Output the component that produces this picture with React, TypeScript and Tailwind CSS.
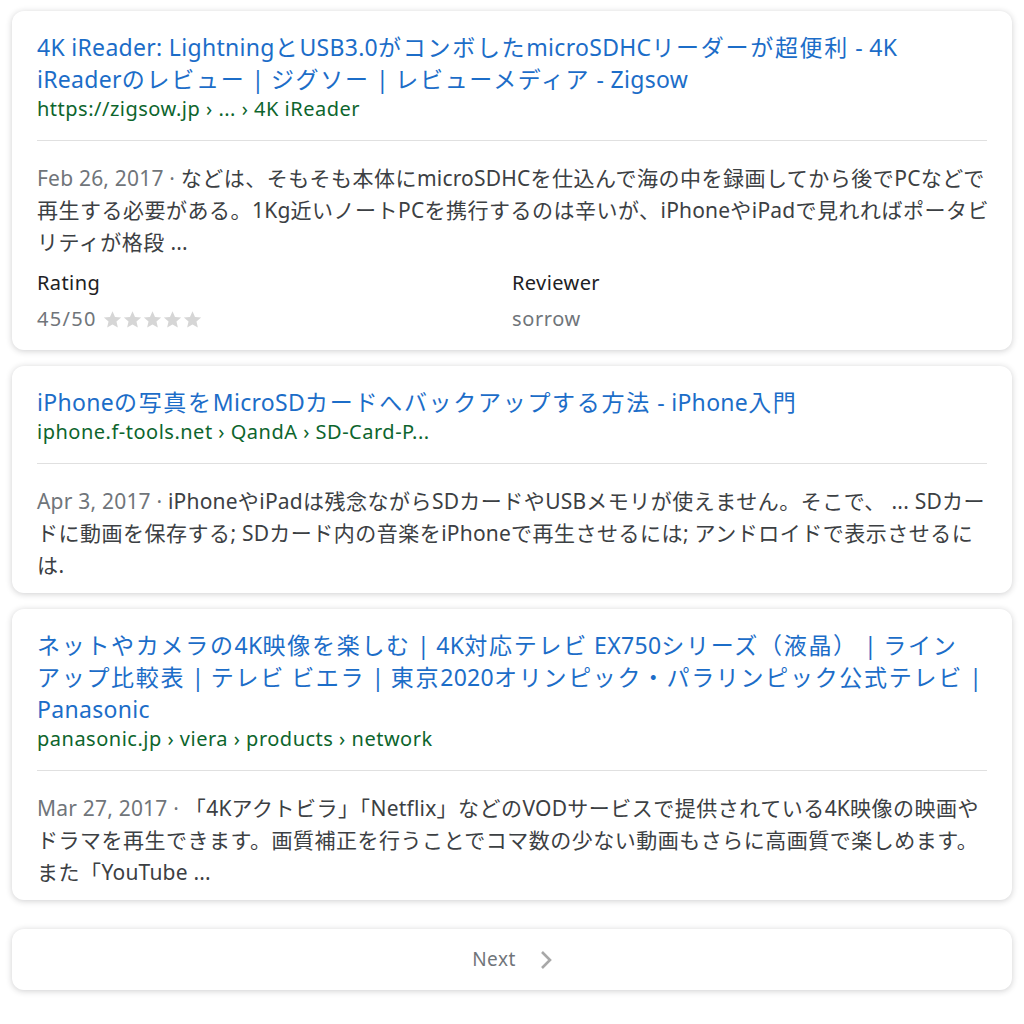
interface Result {
	title: string[]
	url: string
	date: string
	snippet: string[]
	rating?: { score: string; reviewer: string }
}

const results: Result[] = [
	{
		title: [
			"4K iReader: LightningとUSB3.0がコンボしたmicroSDHCリーダーが超便利 - 4K",
			"iReaderのレビュー | ジグソー | レビューメディア - Zigsow"
		],
		url: "https://zigsow.jp › ... › 4K iReader",
		date: "Feb 26, 2017",
		snippet: [
			"などは、そもそも本体にmicroSDHCを仕込んで海の中を録画してから後でPCなどで",
			"再生する必要がある。1Kg近いノートPCを携行するのは辛いが、iPhoneやiPadで見れればポータビ",
			"リティが格段 ..."
		],
		rating: { score: "45/50", reviewer: "sorrow" }
	},
	{
		title: ["iPhoneの写真をMicroSDカードへバックアップする方法 - iPhone入門"],
		url: "iphone.f-tools.net › QandA › SD-Card-P...",
		date: "Apr 3, 2017",
		snippet: [
			"iPhoneやiPadは残念ながらSDカードやUSBメモリが使えません。そこで、 ... SDカー",
			"ドに動画を保存する; SDカード内の音楽をiPhoneで再生させるには; アンドロイドで表示させるに",
			"は."
		]
	},
	{
		title: [
			"ネットやカメラの4K映像を楽しむ | 4K対応テレビ EX750シリーズ（液晶） | ライン",
			"アップ比較表 | テレビ ビエラ | 東京2020オリンピック・パラリンピック公式テレビ |",
			"Panasonic"
		],
		url: "panasonic.jp › viera › products › network",
		date: "Mar 27, 2017",
		snippet: [
			"「4Kアクトビラ」「Netflix」などのVODサービスで提供されている4K映像の映画や",
			"ドラマを再生できます。画質補正を行うことでコマ数の少ない動画もさらに高画質で楽しめます。",
			"また「YouTube ..."
		]
	}
]

// japanese glyphs are set a little wider than the latin ones in the screenshot
const CJK = /([\u3000-\u30ff\u3400-\u9fff\uff00-\uffef]+)/

function Mixed({ text, latin, cjk }: { text: string; latin: string; cjk: string }) {
	return (
		<>
			{text.split(CJK).map((part, i) =>
				part === "" ? null : (
					<span key={i} className={i % 2 === 1 ? cjk : latin}>{part}</span>
				)
			)}
		</>
	)
}

function Star() {
	return (
		<svg width="19" height="19" viewBox="1 1.5 22 21" fill="#d6d6d6">
			<path d="M12 2.5l2.9 6.6 7.1.6-5.4 4.7 1.6 7-6.2-3.7-6.2 3.7 1.6-7L2 9.7l7.1-.6z" />
		</svg>
	)
}

function ResultCard({ r }: { r: Result }) {
	return (
		<div className="bg-white rounded-xl shadow-[0_1px_6px_rgba(32,33,36,0.22)] pl-[25px] pr-4 pt-5 pb-3">
			<div className="text-[23px] leading-8 text-[#1c6dc8] whitespace-nowrap">
				{r.title.map((line, i) => (
					<div key={i}>
						<Mixed text={line} latin="tracking-[0.3px]" cjk="tracking-[1.7px]" />
					</div>
				))}
			</div>
			<div className="text-[20px] leading-7 tracking-[0.5px] text-[#0d652d]">{r.url}</div>
			<div className="h-px bg-[#e0e0e0] mt-[17px] mb-[21px] mr-[9px]" />
			<div className="text-[21px] leading-8 text-[#3c4043] whitespace-nowrap">
				{r.snippet.map((line, i) => (
					<div key={i}>
						{i === 0 && <span className="text-[#70757a] tracking-[0.2px]">{r.date} · </span>}
						<Mixed text={line} latin="tracking-[0.2px]" cjk="tracking-[0.5px]" />
					</div>
				))}
			</div>
			{r.rating && (
				<div className="grid grid-cols-2 mt-[11px] pb-[5px] mr-[9px] text-[20px] leading-7">
					<div>
						<div className="text-[#202124] tracking-[0.4px]">Rating</div>
						<div className="flex items-center gap-[6px] mt-2 text-[#70757a] tracking-[1.3px]">
							{r.rating.score}
							<span className="flex gap-[1px]">
								<Star />
								<Star />
								<Star />
								<Star />
								<Star />
							</span>
						</div>
					</div>
					<div>
						<div className="text-[#202124] tracking-[0.4px]">Reviewer</div>
						<div className="mt-2 text-[#70757a] tracking-[0.6px]">{r.rating.reviewer}</div>
					</div>
				</div>
			)}
		</div>
	)
}

export default function App() {
	return (
		<div
			className="min-h-screen bg-white px-3 pt-[11px] pb-8"
			style={{ fontFamily: '"Noto Sans", "Noto Sans CJK JP", sans-serif' }}
		>
			<div className="flex flex-col gap-4">
				{results.map((r, i) => (
					<ResultCard key={i} r={r} />
				))}
			</div>
			<div className="mt-[29px] bg-white rounded-xl shadow-[0_1px_6px_rgba(32,33,36,0.22)] h-[61px] flex items-center justify-center">
				<span className="text-[19px] tracking-[0.5px] text-[#70757a]">Next</span>
				<svg className="ml-[24px]" width="12" height="20" viewBox="0 0 12 20" fill="none" stroke="#a8a8a8" strokeWidth="2.6">
					<polyline points="2,2 10,10 2,18" />
				</svg>
			</div>
		</div>
	)
}
